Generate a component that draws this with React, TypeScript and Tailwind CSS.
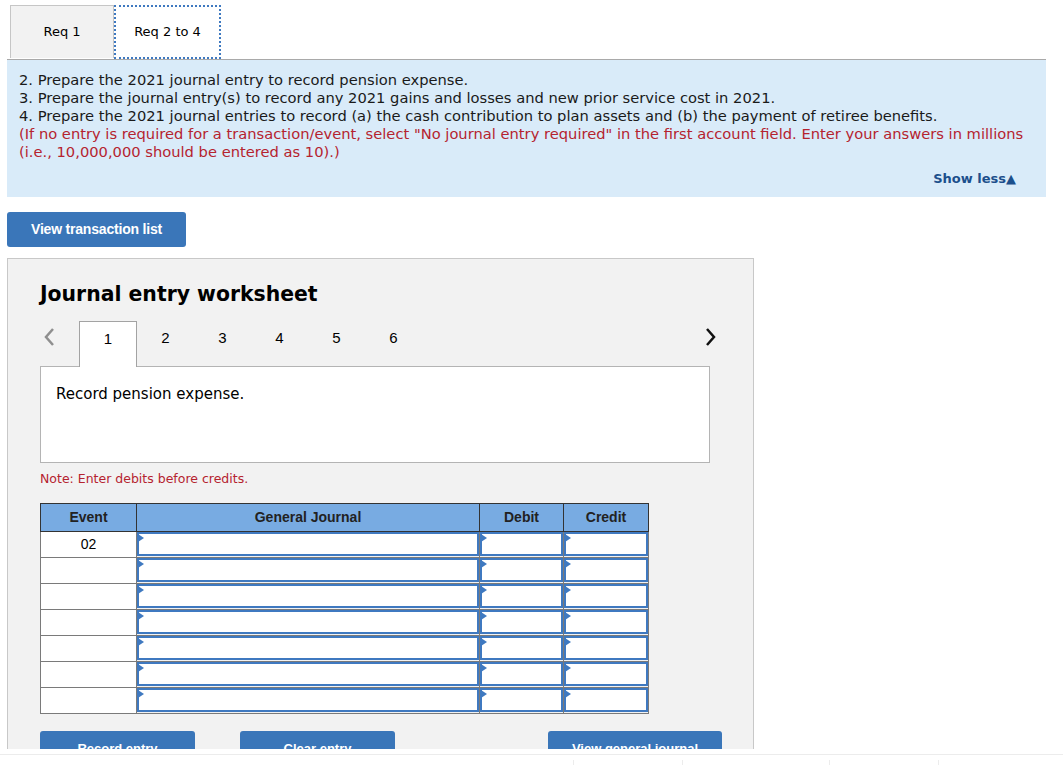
import React from 'react'

const verdana = { fontFamily: '"DejaVu Sans", Verdana, sans-serif' }
const arial = { fontFamily: '"Liberation Sans", Arial, sans-serif' }

// celda de entrada con el triangulito azul
function InputCell() {
  return (
    <div className="relative h-[24px] border-2 border-[#3f79c0] bg-white">
      <span className="absolute left-[-1px] top-[0px] h-0 w-0 border-y-[4px] border-l-[6px] border-y-transparent border-l-[#3f79c0]" />
    </div>
  )
}

export default function App() {
  const rows = ['02', '', '', '', '', '', '']
  const steps = ['2', '3', '4', '5', '6']

  return (
    <div className="w-[1063px] h-[765px] overflow-hidden bg-white text-black" style={verdana}>
      <div className="h-[749px] overflow-hidden">
        {/* Tabs */}
        <div className="flex pl-[10px] pt-[5px]">
          <div className="flex h-[53px] w-[104px] items-center justify-center border border-b-0 border-[#c6c6c6] bg-[#f2f2f2] text-[13px]">
            Req 1
          </div>
          <div className="flex h-[54px] w-[107px] items-center justify-center border-2 border-dotted border-[#3f79c0] bg-white text-[13px]">
            Req 2 to 4
          </div>
        </div>

        {/* Instrucciones */}
        <div className="mx-[7px] w-[1039px] border-t border-[#a9a9a9] bg-[#d9ebf9] pl-[12px] pr-[10px] pt-[11px] pb-[9px] text-[14.7px] leading-[18px]">
          <p className="text-[#1a1a1a]">2. Prepare the 2021 journal entry to record pension expense.</p>
          <p className="text-[#1a1a1a]">3. Prepare the journal entry(s) to record any 2021 gains and losses and new prior service cost in 2021.</p>
          <p className="text-[#1a1a1a]">4. Prepare the 2021 journal entries to record (a) the cash contribution to plan assets and (b) the payment of retiree benefits.</p>
          <p className="text-[#b5232f]">
            (If no entry is required for a transaction/event, select "No journal entry required" in the first account field. Enter your answers in millions (i.e., 10,000,000 should be entered as 10).)
          </p>
          <div className="mt-[9px] flex justify-end pr-[20px]">
            <span className="text-[13px] font-bold leading-[18px] text-[#1c4f8c]">Show less▲</span>
          </div>
        </div>

        {/* Boton lista */}
        <div className="ml-[7px] mt-[15px] flex h-[35px] w-[179px] items-center justify-center rounded-[3px] bg-[#3a76b9] text-[14px] font-bold tracking-[-0.2px] text-white" style={arial}>
          View transaction list
        </div>

        {/* Worksheet */}
        <div className="ml-[7px] mt-[11px] w-[747px] border border-[#c8c8c8] bg-[#f2f2f2] pl-[32px] pt-[22px] pb-[40px]">
          <h1 className="text-[20.4px] font-bold leading-[26px]">Journal entry worksheet</h1>

          <div className="mt-[14px] flex items-end">
            <div className="flex h-[45px] w-[39px] items-start justify-start pl-[3px] pt-[6px]">
              <svg width="12" height="20" viewBox="0 0 12 20">
                <path d="M10 2 L3 10 L10 18" fill="none" stroke="#8f8f8f" strokeWidth="2.5" />
              </svg>
            </div>
            <div className="relative z-10 mb-[-1px] flex h-[46px] w-[58px] items-start justify-center border border-b-0 border-[#a3a3a3] bg-white pt-[6px] text-[15px]" style={arial}>
              1
            </div>
            {steps.map((s) => (
              <div key={s} className="flex h-[45px] w-[57px] items-start justify-center pt-[6px] text-[15px]" style={arial}>
                {s}
              </div>
            ))}
            <div className="flex-1" />
            <div className="mr-[36px] flex h-[45px] items-start pt-[6px]">
              <svg width="12" height="20" viewBox="0 0 12 20">
                <path d="M2 2 L9 10 L2 18" fill="none" stroke="#111" strokeWidth="2.5" />
              </svg>
            </div>
          </div>

          <div className="h-[97px] w-[670px] border border-[#b4b4b4] bg-white pl-[15px] pt-[16px] text-[15px]">
            Record pension expense.
          </div>

          <p className="mt-[7px] text-[12.5px] text-[#b5232f]">Note: Enter debits before credits.</p>

          <table className="mt-[14px] border-collapse border border-[#7a7a7a] text-[14px]" style={arial}>
            <thead>
              <tr className="h-[28px] bg-[#78abe2] font-bold text-[#222]">
                <th className="w-[96px] border border-[#333] font-bold">Event</th>
                <th className="w-[343px] border border-[#333] font-bold">General Journal</th>
                <th className="w-[84px] border border-[#333] font-bold">Debit</th>
                <th className="w-[85px] border border-[#333] font-bold">Credit</th>
              </tr>
            </thead>
            <tbody>
              {rows.map((r, i) => (
                <tr key={i} className="h-[26px]">
                  <td className="border border-[#7a7a7a] bg-white p-0 text-center text-[14px]">{r}</td>
                  <td className="border border-[#7a7a7a] p-0"><InputCell /></td>
                  <td className="border border-[#7a7a7a] p-0"><InputCell /></td>
                  <td className="border border-[#7a7a7a] p-0"><InputCell /></td>
                </tr>
              ))}
            </tbody>
          </table>

          <div className="mt-[17px] flex text-[13px] font-bold text-white" style={arial}>
            <div className="flex h-[35px] w-[155px] items-center justify-center rounded-[3px] bg-[#3a76b9]">Record entry</div>
            <div className="ml-[45px] flex h-[35px] w-[155px] items-center justify-center rounded-[3px] bg-[#3a76b9]">Clear entry</div>
            <div className="ml-[153px] flex h-[35px] w-[174px] items-center justify-center rounded-[3px] bg-[#3a76b9]">View general journal</div>
          </div>
        </div>
      </div>

      {/* franja inferior */}
      <div className="mt-[5px] h-[11px] border-t border-[#ececec]">
        <div className="relative h-full">
          <span className="absolute left-[573px] top-[5px] h-[6px] border-l border-[#ececec]" />
          <span className="absolute left-[682px] top-[5px] h-[6px] border-l border-[#ececec]" />
          <span className="absolute left-[829px] top-[5px] h-[6px] border-l border-[#ececec]" />
          <span className="absolute left-[938px] top-[5px] h-[6px] border-l border-[#ececec]" />
        </div>
      </div>
    </div>
  )
}
